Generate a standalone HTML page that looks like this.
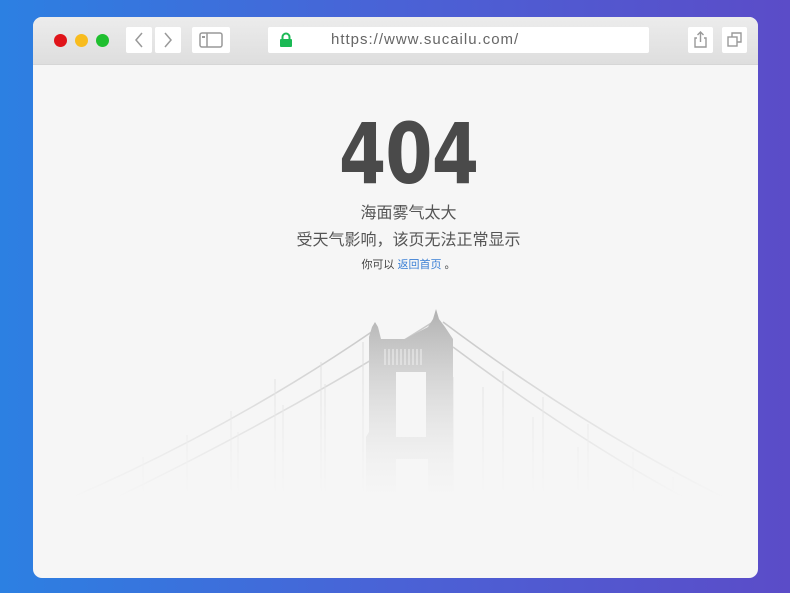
<!DOCTYPE html>
<html><head><meta charset="utf-8"><style>
*{margin:0;padding:0;box-sizing:border-box}
body{width:790px;height:593px;overflow:hidden;background:linear-gradient(90deg,#2c80e2,#4a62d6 50%,#5b4cc8);font-family:"Liberation Sans","Noto Sans CJK SC",sans-serif;position:relative}
.win{position:absolute;left:33px;top:17px;width:725px;height:561px;background:#f6f6f6;border-radius:9px;overflow:hidden}
.bar{height:48px;background:linear-gradient(#ececec,#dedede);border-bottom:1px solid #d6d6d6;position:relative}
.dot{position:absolute;top:17px;width:13px;height:13px;border-radius:50%}
.btn{position:absolute;top:10px;height:26px;background:#fff;border-radius:2px}
.url{position:absolute;left:235px;top:10px;width:381px;height:26px;background:#fff;border-radius:2px;font-size:15px;color:#666;letter-spacing:1px;line-height:26px;padding-left:63px}
h1{position:absolute;left:26px;right:0;top:95px;text-align:center;font-family:"DejaVu Sans Condensed","Liberation Sans",sans-serif;font-size:84px;font-weight:bold;color:#4a4a4a;letter-spacing:-1px;line-height:84px;transform:scaleX(.9)}
.t{position:absolute;left:26px;right:0;text-align:center;color:#555}
</style></head><body>
<div class="win">
<div class="bar">
<div class="dot" style="left:21px;background:#e0141a"></div>
<div class="dot" style="left:42px;background:#f8bc1e"></div>
<div class="dot" style="left:63px;background:#1fbf2f"></div>
<div class="btn" style="left:93px;width:26px"><svg width="26" height="26"><path d="M16 6 L10 13 L16 20" fill="none" stroke="#999" stroke-width="1.5"/></svg></div>
<div class="btn" style="left:122px;width:26px"><svg width="26" height="26"><path d="M10 6 L16 13 L10 20" fill="none" stroke="#999" stroke-width="1.5"/></svg></div>
<div class="btn" style="left:159px;width:38px"><svg width="38" height="26"><rect x="8" y="6" width="22" height="14" rx="2" fill="none" stroke="#999" stroke-width="1.5"/><line x1="15" y1="6" x2="15" y2="20" stroke="#999" stroke-width="1.5"/><rect x="10" y="9" width="3" height="2" fill="#999"/></svg></div>
<div class="url"><svg style="position:absolute;left:11px;top:5px" width="14" height="16"><path d="M3.5 7 V5 a3.5 3.5 0 0 1 7 0 V7" fill="none" stroke="#1bb955" stroke-width="2"/><rect x="1" y="7" width="12" height="8" rx="1" fill="#1bb955"/></svg>https://www.sucailu.com/</div>
<div class="btn" style="left:655px;width:25px"><svg width="25" height="26"><path d="M9 11 H7 V20 H18 V11 H16 M12.5 15 V5 M9.5 8 L12.5 5 L15.5 8" fill="none" stroke="#999" stroke-width="1.4"/></svg></div>
<div class="btn" style="left:689px;width:25px"><svg width="25" height="26"><rect x="6" y="10" width="9" height="9" fill="none" stroke="#999" stroke-width="1.4"/><path d="M10 10 V6 H19 V15 H15" fill="none" stroke="#999" stroke-width="1.4"/></svg></div>
</div>
<svg style="position:absolute;left:0;top:270px" width="725" height="230">
<defs><linearGradient id="f" x1="0" y1="0" x2="0" y2="1"><stop offset="0" stop-color="#f6f6f6" stop-opacity="0"/><stop offset=".75" stop-color="#f6f6f6" stop-opacity=".85"/><stop offset=".92" stop-color="#f6f6f6"/></linearGradient>
<linearGradient id="tw" x1="0" y1="0" x2="0" y2="1"><stop offset="0" stop-color="#a8a8a8"/><stop offset="1" stop-color="#e4e4e4"/></linearGradient></defs>
<g stroke="#bdbdbd" stroke-width="1.6" fill="none">
<path d="M340 44 Q200 140 40 210"/><path d="M400 35 Q250 130 80 212"/>
<path d="M410 35 Q550 140 690 210"/><path d="M420 60 Q540 150 650 210"/>
</g>
<g stroke="#d2d2d2" stroke-width="1">
<path d="M110 170V212M154 148V212M198 124V212M242 92V212M288 75V212M330 55V212M205 145V212M250 118V212M292 97V212M470 84V212M510 110V212M555 137V212M600 165V212M640 190V212M420 90V212M450 100V212M500 130V212M545 160V212"/>
</g>
<path d="M336 50 L339 40 L342 35 L345 40 L348 52 L372 52 L395 40 L400 32 L403 22 L406 32 L412 40 L420 52 L420 230 L395 230 L395 172 L363 172 L363 230 L333 230 L333 150 L336 145 Z M363 85 L363 150 L393 150 L393 85 Z" fill="url(#tw)" fill-rule="evenodd"/>
<g stroke="#eee" stroke-width="1"><path d="M352 62V78M356 62V78M360 62V78M364 62V78M368 62V78M372 62V78M376 62V78M380 62V78M384 62V78M388 62V78"/></g>
<rect x="0" y="0" width="725" height="230" fill="url(#f)"/>
</svg>
<h1>404</h1>
<div class="t" style="top:182px;font-size:16px">海面雾气太大</div>
<div class="t" style="top:209px;font-size:16px">受天气影响，该页无法正常显示</div>
<div class="t" style="top:239px;font-size:11px;color:#444">你可以 <span style="color:#3a7fd5">返回首页</span> 。</div>
</div>
</body></html>
